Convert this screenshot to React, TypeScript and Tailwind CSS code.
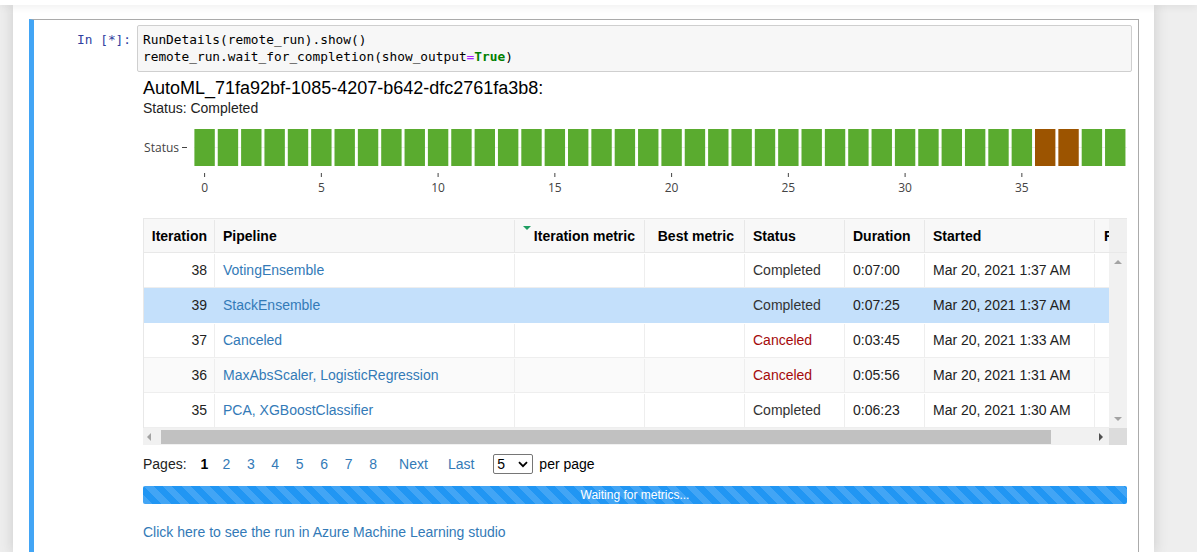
import React from "react";

type Row = {
  iter: number;
  pipeline: string;
  status: string;
  duration: string;
  started: string;
  selected?: boolean;
  shaded?: boolean;
};

const rows: Row[] = [
  { iter: 38, pipeline: "VotingEnsemble", status: "Completed", duration: "0:07:00", started: "Mar 20, 2021 1:37 AM" },
  { iter: 39, pipeline: "StackEnsemble", status: "Completed", duration: "0:07:25", started: "Mar 20, 2021 1:37 AM", selected: true },
  { iter: 37, pipeline: "Canceled", status: "Canceled", duration: "0:03:45", started: "Mar 20, 2021 1:33 AM" },
  { iter: 36, pipeline: "MaxAbsScaler, LogisticRegression", status: "Canceled", duration: "0:05:56", started: "Mar 20, 2021 1:31 AM", shaded: true },
  { iter: 35, pipeline: "PCA, XGBoostClassifier", status: "Completed", duration: "0:06:23", started: "Mar 20, 2021 1:30 AM" },
];

const StatusChart = () => {
  // 40 iterations, 36 and 37 were canceled
  const bars = Array.from({ length: 40 }, (_, i) => i);
  const ticks = [0, 5, 10, 15, 20, 25, 30, 35];
  return (
    <svg width={984} height={90} className="block mt-[4px]">
      <line x1={51} x2={984} y1={27.5} y2={27.5} stroke="#eeeeee" />
      {bars.map((i) => (
        <rect
          key={i}
          x={51.4 + i * 23.35}
          y={9}
          width={20.4}
          height={37}
          fill={i === 36 || i === 37 ? "#9c5400" : "#5aab2f"}
        />
      ))}
      <text x={36} y={31.5} textAnchor="end" fontSize={12} fill="#444" fontFamily="Open Sans, sans-serif">
        Status
      </text>
      <line x1={39} x2={44} y1={27.5} y2={27.5} stroke="#444" />
      {ticks.map((k) => {
        const cx = 61.6 + k * 23.35;
        return (
          <g key={k}>
            <line x1={cx} x2={cx} y1={53} y2={57} stroke="#444" />
            <text x={cx} y={72} textAnchor="middle" fontSize={12} fill="#444" fontFamily="Open Sans, sans-serif">
              {k}
            </text>
          </g>
        );
      })}
    </svg>
  );
};

const RunTable = () => {
  return (
    <div className="mt-[8px] w-[984px] text-[14px]">
      {/* header */}
      <div className="flex w-[984px] h-[35px] border-t border-l border-[#e8e8e8] bg-[#f8f8f8] font-bold text-black">
        <div className="w-[966px] overflow-hidden">
          <div className="flex w-[1000px] h-[34px] pt-[1px] border-b border-[#e8e8e8]">
            <div className="w-[71px] shrink-0 border-r border-[#e8e8e8] flex items-center justify-end pr-[7px]">Iteration</div>
            <div className="w-[300px] shrink-0 border-r border-[#e8e8e8] flex items-center pl-[8px]">Pipeline</div>
            <div className="relative w-[130px] shrink-0 border-r border-[#e8e8e8] flex items-center justify-end pr-[9px]">
              <span className="absolute left-[8px] top-[6px] w-0 h-0 border-l-[4.5px] border-r-[4.5px] border-t-[4px] border-l-transparent border-r-transparent border-t-[#1f9d62]" />
              Iteration metric
            </div>
            <div className="w-[100px] shrink-0 border-r border-[#e8e8e8] flex items-center justify-end pr-[10px]">Best metric</div>
            <div className="w-[100px] shrink-0 border-r border-[#e8e8e8] flex items-center pl-[8px]">Status</div>
            <div className="w-[80px] shrink-0 border-r border-[#e8e8e8] flex items-center pl-[8px]">Duration</div>
            <div className="w-[170px] shrink-0 border-r border-[#e8e8e8] flex items-center pl-[8px]">Started</div>
            <div className="w-[60px] shrink-0 flex items-center pl-[9px]">Run Id</div>
          </div>
        </div>
        <div className="w-[18px] h-[34px] bg-[#f0f0f0] border-b border-[#e8e8e8]" />
      </div>

      {/* body */}
      <div className="flex w-[984px] border-l border-[#e8e8e8]">
        <div className="w-[965px] overflow-hidden">
          {rows.map((r) => {
            const bg = r.selected ? "bg-[#c4e0fb]" : r.shaded ? "bg-[#fafafa]" : "bg-white";
            const bc = r.selected ? "border-[#c4e0fb]" : "border-[#eeeeee]";
            return (
              <div key={r.iter} className={`flex w-[1000px] h-[35px] pt-[1px] border-b ${bc} ${bg} text-[#333]`}>
                <div className={`w-[71px] shrink-0 border-r ${bc} flex items-center justify-end pr-[7px] text-[#222]`}>{r.iter}</div>
                <div className={`w-[300px] shrink-0 border-r ${bc} flex items-center pl-[8px] text-[#337ab7]`}>{r.pipeline}</div>
                <div className={`w-[130px] shrink-0 border-r ${bc}`} />
                <div className={`w-[100px] shrink-0 border-r ${bc}`} />
                <div
                  className={`w-[100px] shrink-0 border-r ${bc} flex items-center pl-[8px] ${
                    r.status === "Canceled" ? "text-[#a50a0a]" : "text-[#333]"
                  }`}
                >
                  {r.status}
                </div>
                <div className={`w-[80px] shrink-0 border-r ${bc} flex items-center pl-[8px] text-[#222]`}>{r.duration}</div>
                <div className={`w-[170px] shrink-0 border-r ${bc} flex items-center pl-[8px] text-[#222]`}>{r.started}</div>
                <div className="w-[60px] shrink-0" />
              </div>
            );
          })}
        </div>
        {/* vertical scrollbar */}
        <div className="w-[18px] h-[175px] bg-[#f1f1f1] flex flex-col items-center justify-between py-[7px]">
          <span className="w-0 h-0 border-l-[4px] border-r-[4px] border-b-[4px] border-l-transparent border-r-transparent border-b-[#a3a3a3]" />
          <span className="w-0 h-0 border-l-[4px] border-r-[4px] border-t-[4px] border-l-transparent border-r-transparent border-t-[#a3a3a3]" />
        </div>
      </div>

      {/* horizontal scrollbar */}
      <div className="flex w-[984px] h-[17px]">
        <div className="w-[966px] h-[17px] bg-[#f1f1f1] flex items-center">
          <span className="ml-[4px] w-0 h-0 border-t-[4px] border-b-[4px] border-r-[4px] border-t-transparent border-b-transparent border-r-[#a3a3a3]" />
          <div className="ml-[10px] w-[890px] h-[14px] mt-[1px] bg-[#c1c1c1]" />
          <span className="ml-[48px] w-0 h-0 border-t-[4px] border-b-[4px] border-l-[4px] border-t-transparent border-b-transparent border-l-[#505050]" />
        </div>
        <div className="w-[18px] h-[17px] bg-[#dcdcdc]" />
      </div>
    </div>
  );
};

const Pager = () => {
  const pages = [2, 3, 4, 5, 6, 7, 8];
  return (
    <div className="mt-[9px] h-[20px] flex items-center text-[14px] text-[#222]">
      <span>Pages:</span>
      <span className="ml-[14px] font-bold text-black">1</span>
      {pages.map((p) => (
        <span key={p} className={`${p === 2 ? "ml-[14px]" : "ml-[16.7px]"} text-[#337ab7]`}>
          {p}
        </span>
      ))}
      <span className="ml-[22px] text-[#337ab7]">Next</span>
      <span className="ml-[20px] text-[#337ab7]">Last</span>
      <div className="ml-[19px] w-[40px] h-[20px] border border-[#767676] rounded-[2px] flex items-center justify-between pl-[3px] pr-[4px] text-black">
        <span>5</span>
        <svg width={10} height={7} viewBox="0 0 10 7">
          <path d="M1 1.2 L5 5.2 L9 1.2" fill="none" stroke="#000" strokeWidth={1.8} />
        </svg>
      </div>
      <span className="ml-[6px] text-black">per page</span>
    </div>
  );
};

export default function App() {
  return (
    <div className="w-[1197px] h-[552px] overflow-hidden bg-[#eeeeee] font-['Liberation_Sans',Arial,sans-serif]">
      <div className="relative z-10 h-[5px] bg-white shadow-[0_0_10px_rgba(0,0,0,0.12)]" />
      <div className="ml-[13px] w-[1141px] h-[547px] bg-white shadow-[0_0_12px_1px_rgba(87,87,87,0.2)] pt-[14px] pl-[16px]">
        <div className="w-[1110px] h-[600px] border-t border-r border-[#ababab] border-l-[5px] border-l-[#42a5f5]">
          {/* input */}
          <div className="flex pt-[5px]">
            <div className="w-[103px] shrink-0 text-right pr-[6px] pt-[6px] leading-[17px] text-[12.8px] text-[#303f9f] font-['DejaVu_Sans_Mono',monospace]">
              In&nbsp;[*]:
            </div>
            <div className="w-[995px] border border-[#cfcfcf] rounded-[2px] bg-[#f7f7f7] pt-[5px] pb-[6px] px-[5px] text-[12.8px] leading-[17px] text-black font-['DejaVu_Sans_Mono',monospace] whitespace-pre">
              <div>RunDetails(remote_run).show()</div>
              <div>
                remote_run.wait_for_completion(show_output<span className="text-[#aa22ff]">=</span>
                <span className="text-[#008000] font-bold">True</span>)
              </div>
            </div>
          </div>

          {/* output */}
          <div className="pl-[109px]">
            <div className="mt-[6px] h-[20px] leading-[20px] text-[18px] text-black">
              AutoML_71fa92bf-1085-4207-b642-dfc2761fa3b8:
            </div>
            <div className="mt-[2px] h-[16px] leading-[16px] text-[14px] text-[#222]">Status: Completed</div>
            <StatusChart />
            <RunTable />
            <Pager />
            <div className="mt-[12px] w-[984px] h-[18px] rounded-[2px] bg-[repeating-linear-gradient(45deg,#42a5f5_0px,#42a5f5_6.6px,#2196f3_6.6px,#2196f3_13.2px)] flex items-center justify-center text-[12px] text-white">
              Waiting for metrics...
            </div>
            <div className="mt-[20px] h-[16px] leading-[16px] text-[14px] text-[#337ab7]">
              Click here to see the run in Azure Machine Learning studio
            </div>
          </div>
        </div>
      </div>
    </div>
  );
}
